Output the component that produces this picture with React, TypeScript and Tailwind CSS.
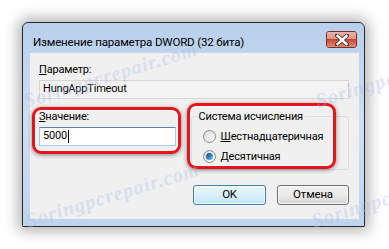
import React from "react";

const ui = { fontFamily: "Roboto, 'Noto Sans', sans-serif" };

function Watermark({ className }: { className: string }) {
  return (
    <span
      className={
        "absolute pointer-events-none whitespace-nowrap italic font-bold text-[20px] tracking-[1px] text-[#aebde4] opacity-35 -rotate-[17deg] origin-left " +
        className
      }
      style={{ fontFamily: "'Liberation Serif', serif" }}
    >
      Soringpcrepair.com
    </span>
  );
}

function Radio({ checked, label, hotkey }: { checked?: boolean; label: string; hotkey: string }) {
  return (
    <div className="flex items-center h-[20px]">
      <div className="w-[13px] h-[13px] ml-[11px] rounded-full border border-[#8a8a8a] bg-gradient-to-br from-[#d8d8d8] to-[#fdfdfd] flex items-center justify-center">
        {checked && (
          <div className="w-[7px] h-[7px] rounded-full bg-gradient-to-br from-[#134c7c] via-[#2d7fc1] to-[#86d0f6]" />
        )}
      </div>
      <span className="ml-[5px] text-[11px] tracking-[-0.2px] leading-[15px] text-black">
        <span className="underline">{hotkey}</span>
        {label}
      </span>
    </div>
  );
}

function CloseButton() {
  return (
    <div className="w-[31px] h-[17px] rounded-[3px] border border-[#7d2f26] overflow-hidden flex flex-col">
      <div className="relative flex-1 flex flex-col">
        <div className="h-[7px] bg-gradient-to-b from-[#eab2a8] to-[#e09486]" />
        <div className="flex-1 bg-gradient-to-b from-[#c9422f] to-[#e08a77]" />
        <svg className="absolute left-[8px] top-[2px]" width="14" height="12" viewBox="0 0 14 12">
          <path d="M2 1.5 L12 10.5 M12 1.5 L2 10.5" stroke="#3a3a3a" strokeWidth="4.2" strokeLinecap="round" />
          <path d="M2.6 2 L11.4 10 M11.4 2 L2.6 10" stroke="#ffffff" strokeWidth="2.4" strokeLinecap="square" />
        </svg>
      </div>
    </div>
  );
}

export default function App() {
  return (
    <div className="relative w-[389px] h-[249px] overflow-hidden bg-white pt-[22px] pl-[22px]" style={ui}>
      <div className="w-[343px] h-[205px] flex flex-col rounded-t-[6px] rounded-b-[1px] border border-[#2a2a2a] bg-gradient-to-b from-[#b8cfec] via-[#cfdff3] to-[#bfd4ee] shadow-[0_0_14px_4px_rgba(0,0,0,0.3)] px-[7px]">
        <div className="h-[29px] flex items-start justify-between">
          <span className="mt-[12px] ml-[3px] text-[11.6px] tracking-[-0.2px] leading-[15px] text-black">
            Изменение параметра DWORD (32 бита)
          </span>
          <div className="mt-[8px]">
            <CloseButton />
          </div>
        </div>

        <div className="relative h-[167px] w-[329px] bg-[#f0f0f0] border-t border-[#c8d6e6] flex flex-col pl-[9px] pr-[10px] text-[11px] tracking-[-0.2px]">
          <span className="mt-[9px] leading-[15px] text-black">
            <span className="underline">П</span>араметр:
          </span>
          <div className="mt-[3px] h-[19px] border border-[#d6d6d6] bg-[#f3f3f3] flex items-center pl-[3px] text-black">
            HungAppTimeout
          </div>

          <div className="flex mt-[10px]">
            <div className="w-[137px] flex flex-col">
              <span className="leading-[15px] text-black">
                <span className="underline">З</span>начение:
              </span>
              <div className="mt-[3px] h-[19px] border border-[#abc8e6] border-t-[#5a86b5] bg-white flex items-center pl-[3px] text-black">
                5000<span className="w-px h-[13px] bg-black ml-px" />
              </div>
            </div>

            <div className="relative ml-[15px] mt-[7px] w-[159px] h-[54px] border border-[#d5dfe5] rounded-[3px]">
              <span className="absolute -top-[8px] left-[5px] px-[2px] bg-[#f0f0f0] leading-[15px] text-black">
                Система исчисления
              </span>
              <div className="mt-[9px] flex flex-col">
                <Radio hotkey="Ш" label="естнадцатеричная" />
                <Radio checked hotkey="Д" label="есятичная" />
              </div>
            </div>
          </div>

          <div className="flex justify-end gap-[11px] mt-[15px]">
            <button className="w-[73px] h-[20px] rounded-[3px] border border-[#3c7fb1] bg-gradient-to-b from-[#eaf6fd] via-[#d9f0fc] to-[#bee6fd] text-[11.5px] text-black shadow-[inset_0_0_0_1px_rgba(255,255,255,0.7)]">
              OK
            </button>
            <button className="w-[72px] h-[20px] rounded-[3px] border border-[#707070] bg-gradient-to-b from-[#f2f2f2] via-[#ebebeb] to-[#d5d5d5] text-[11.5px] text-black shadow-[inset_0_0_0_1px_rgba(255,255,255,0.7)]">
              Отмена
            </button>
          </div>

          <div className="absolute left-[2px] top-[54px] w-[149px] h-[47px] rounded-[9px] border-[3px] border-[#e4161c] shadow-[0_1px_4px_rgba(0,0,0,0.45),inset_0_0_0_1px_rgba(255,255,255,0.8)]" />
          <div className="absolute left-[157px] top-[50px] w-[149px] h-[66px] rounded-[9px] border-[3px] border-[#e4161c] shadow-[0_1px_4px_rgba(0,0,0,0.45),inset_0_0_0_1px_rgba(255,255,255,0.8)]" />
        </div>
      </div>

      <Watermark className="left-[24px] top-[86px]" />
      <Watermark className="left-[316px] top-[86px]" />
      <Watermark className="left-[26px] top-[206px]" />
      <Watermark className="left-[312px] top-[206px]" />
    </div>
  );
}
